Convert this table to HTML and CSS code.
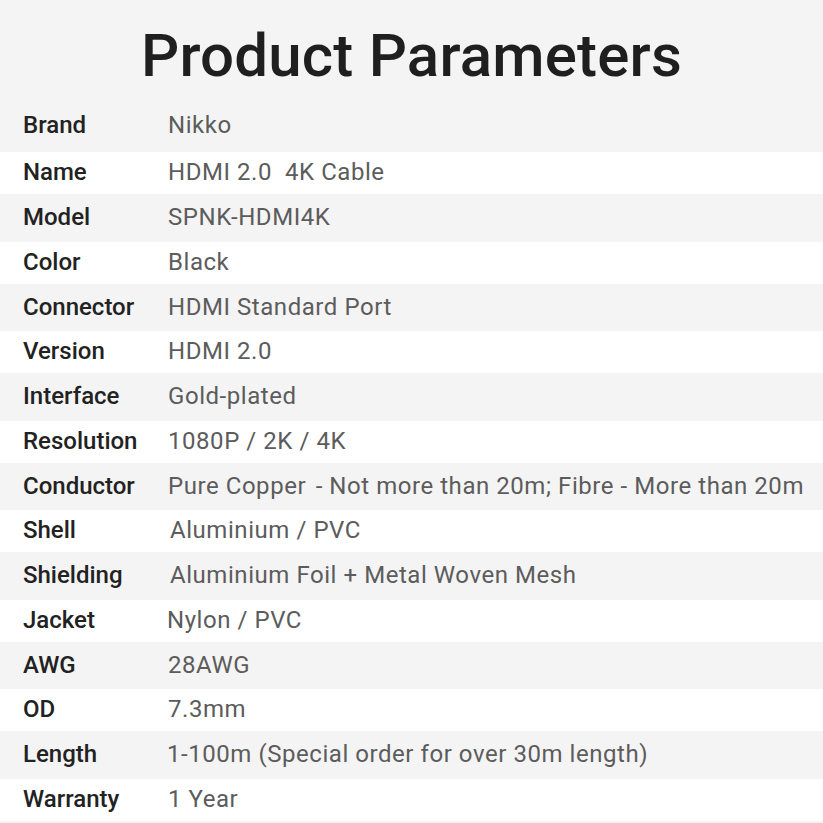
FILE: index.html
```html
<!DOCTYPE html>
<html>
<head>
<meta charset="utf-8">
<link rel="stylesheet" href="styles.css">
</head>
<body>
<div class="page">
  <div class="header">
    <h1 class="title">Product Parameters</h1>
    <div class="row first"><span class="label">Brand</span><span class="value">Nikko</span></div>
  </div>
  <div class="row w"><span class="label">Name</span><span class="value">HDMI 2.0&nbsp; 4K Cable</span></div>
  <div class="row g"><span class="label">Model</span><span class="value">SPNK-HDMI4K</span></div>
  <div class="row w"><span class="label">Color</span><span class="value">Black</span></div>
  <div class="row g"><span class="label">Connector</span><span class="value">HDMI Standard Port</span></div>
  <div class="row w"><span class="label">Version</span><span class="value">HDMI 2.0</span></div>
  <div class="row g"><span class="label">Interface</span><span class="value">Gold-plated</span></div>
  <div class="row w"><span class="label">Resolution</span><span class="value">1080P / 2K / 4K</span></div>
  <div class="row g"><span class="label">Conductor</span><span class="value">Pure Copper <span class="gap"></span>- Not more than 20m; Fibre - More than 20m</span></div>
  <div class="row w"><span class="label">Shell</span><span class="value shift">Aluminium / PVC</span></div>
  <div class="row g"><span class="label">Shielding</span><span class="value shift">Aluminium Foil + Metal Woven Mesh</span></div>
  <div class="row w"><span class="label">Jacket</span><span class="value back">Nylon / PVC</span></div>
  <div class="row g"><span class="label">AWG</span><span class="value">28AWG</span></div>
  <div class="row w"><span class="label">OD</span><span class="value">7.3mm</span></div>
  <div class="row g"><span class="label">Length</span><span class="value back">1-100m (Special order for over 30m length)</span></div>
  <div class="row w"><span class="label">Warranty</span><span class="value">1 Year</span></div>
  <div class="footer"></div>
</div>
</body>
</html>
```

FILE: styles.css
```css
html, body {
  margin: 0;
  padding: 0;
  background: #f4f4f4;
}
.page {
  width: 823px;
  height: 823px;
  overflow: hidden;
  font-family: Roboto, "Liberation Sans", sans-serif;
}
.header {
  background: #f4f4f4;
  height: 152px;
  display: flex;
  flex-direction: column;
}
.title {
  margin: 0;
  height: 102px;
  font-size: 60px;
  font-weight: 500;
  color: #1f1f1f;
  text-align: center;
  line-height: 112px;
  letter-spacing: 0.2px;
}
.row {
  display: flex;
  align-items: center;
  padding-left: 23px;
  box-sizing: border-box;
}
.row.first {
  height: 50px;
  padding-bottom: 5px;
}
.row.w {
  background: #ffffff;
  height: 42px;
  padding-bottom: 2px;
}
.row.g {
  background: #f4f4f4;
  height: 47.5px;
  padding-bottom: 1px;
}
.label {
  width: 145px;
  font-size: 24px;
  font-weight: 500;
  color: #222222;
}
.value {
  font-size: 24px;
  font-weight: 400;
  color: #5c5c5c;
  letter-spacing: 0.55px;
}
.gap {
  display: inline-block;
  width: 3px;
}
.value.shift {
  margin-left: 2px;
}
.value.back {
  margin-left: -1px;
}
.footer {
  height: 10px;
  background: #f4f4f4;
}
```
